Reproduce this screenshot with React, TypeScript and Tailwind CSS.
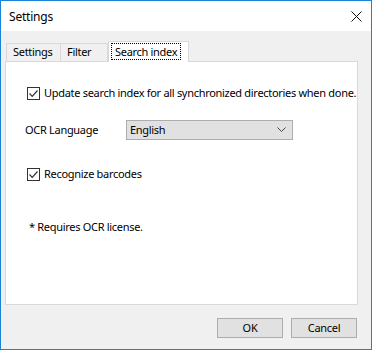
import React from "react";

const Check = () => (
  <span className="w-[13px] h-[13px] border border-[#333333] bg-white flex items-center justify-center shrink-0">
    <svg width="11" height="11" viewBox="0 0 11 11">
      <path d="M1.5 5.5 L4.2 8.3 L9.5 2.5" fill="none" stroke="#333333" strokeWidth="1.2" />
    </svg>
  </span>
);

const App = () => {
  return (
    <div
      className="w-[372px] h-[350px] border border-[#1883d7] flex flex-col text-[11px] tracking-[-0.3px] text-black"
      style={{ fontFamily: '"Segoe UI", "Noto Sans", sans-serif' }}
    >
      {/* title bar */}
      <div className="h-[30px] bg-white flex items-center justify-between pl-[8px] pr-[9px]">
        <span className="text-[12px] tracking-[-0.2px] pt-[1px]">Settings</span>
        <svg width="11" height="11" viewBox="0 0 11 11">
          <path d="M0.5 0.5 L10.5 10.5 M10.5 0.5 L0.5 10.5" stroke="#111111" strokeWidth="1" />
        </svg>
      </div>

      <div className="flex-1 bg-[#f0f0f0] pl-[4px] pt-[10px] flex flex-col">
        {/* tabs */}
        <div className="flex items-end h-[20px] pl-[1px]">
          <div className="h-[18px] w-[55px] border border-b-0 border-[#d9d9d9] flex items-center pl-[6px]">
            Settings
          </div>
          <div className="h-[18px] w-[47px] border border-l-0 border-b-0 border-[#d9d9d9] flex items-center pl-[6px]">
            Filter
          </div>
          <div className="relative z-10 h-[21px] -mb-[1px] w-[81px] border border-b-0 border-[#d9d9d9] bg-white flex items-start pt-[1px] pl-[2px]">
            <span className="border border-dotted border-black px-[3px] leading-[15px]">Search index</span>
          </div>
        </div>

        {/* panel */}
        <div className="w-[353px] h-[244px] border border-[#d9d9d9] bg-white flex flex-col pl-[21px] pt-[25px]">
          <div className="flex items-center gap-[4px] h-[13px]">
            <Check />
            <span className="whitespace-nowrap">Update search index for all synchronized directories when done.</span>
          </div>

          <div className="flex items-center mt-[20px] -ml-[2px]">
            <span className="w-[101px]">OCR Language</span>
            <div className="w-[167px] h-[20px] border border-[#adadad] bg-[#e1e1e1] flex items-center justify-between pl-[3px] pr-[6px]">
              <span>English</span>
              <svg width="9" height="6" viewBox="0 0 9 6">
                <path d="M0.5 0.5 L4.5 4.5 L8.5 0.5" fill="none" stroke="#444444" strokeWidth="1" />
              </svg>
            </div>
          </div>

          <div className="flex items-center gap-[4px] h-[13px] mt-[28px]">
            <Check />
            <span>Recognize barcodes</span>
          </div>

          <div className="mt-[38px] ml-[2px]">* Requires OCR license.</div>
        </div>

        {/* buttons */}
        <div className="flex justify-end gap-[8px] pr-[14px] mt-[13px]">
          <button className="w-[66px] h-[20px] border border-[#adadad] bg-[#e1e1e1] flex items-center justify-center">
            OK
          </button>
          <button className="w-[66px] h-[20px] border border-[#adadad] bg-[#e1e1e1] flex items-center justify-center">
            Cancel
          </button>
        </div>
      </div>
    </div>
  );
};

export default App;
